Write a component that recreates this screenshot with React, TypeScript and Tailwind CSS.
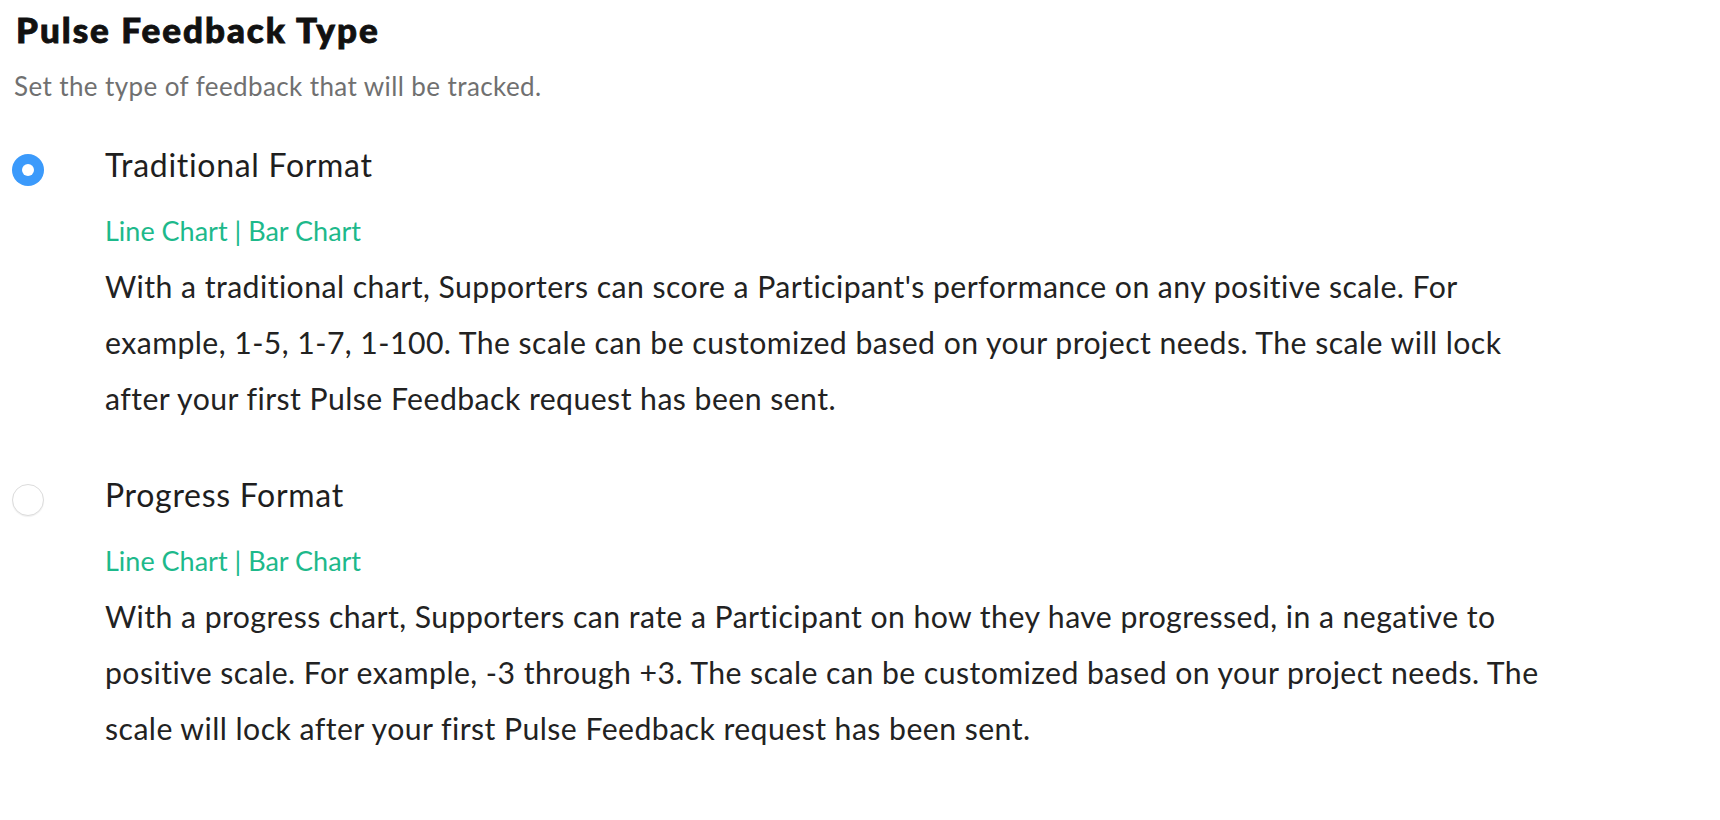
import { useState } from "react";

type Option = {
  id: string;
  title: string;
  lines: string[];
};

const options: Option[] = [
  {
    id: "traditional",
    title: "Traditional Format",
    lines: [
      "With a traditional chart, Supporters can score a Participant's performance on any positive scale. For",
      "example, 1-5, 1-7, 1-100. The scale can be customized based on your project needs. The scale will lock",
      "after your first Pulse Feedback request has been sent.",
    ],
  },
  {
    id: "progress",
    title: "Progress Format",
    lines: [
      "With a progress chart, Supporters can rate a Participant on how they have progressed, in a negative to",
      "positive scale. For example, -3 through +3. The scale can be customized based on your project needs. The",
      "scale will lock after your first Pulse Feedback request has been sent.",
    ],
  },
];

function Radio({ checked, onClick }: { checked: boolean; onClick: () => void }) {
  return (
    <button
      type="button"
      onClick={onClick}
      className={
        checked
          ? "mt-[9px] flex h-[32px] w-[32px] shrink-0 items-center justify-center rounded-full bg-[#3b9afb]"
          : "mt-[9px] flex h-[32px] w-[32px] shrink-0 items-center justify-center rounded-full border border-[#dcdcdc] bg-white shadow-[0_1px_1px_rgba(0,0,0,0.06)]"
      }
    >
      {checked ? <span className="h-[12px] w-[12px] rounded-full bg-white" /> : null}
    </button>
  );
}

export default function App() {
  const [selected, setSelected] = useState("traditional");

  return (
    <main className="min-h-screen bg-white pt-[7px] font-['Lato',_sans-serif] text-[#222] [font-variant-ligatures:none]">
      <h1 className="pl-[16px] text-[35px] leading-[44px] font-black tracking-[2px] text-[#111] [-webkit-text-stroke:0.9px_#111]">
        Pulse Feedback Type
      </h1>
      <p className="mt-[19px] pl-[14px] text-[26px] leading-[32px] tracking-[0.4px] text-[#707070]">
        Set the type of feedback that will be tracked.
      </p>

      <div className="mt-[43px] flex flex-col gap-[49px]">
        {options.map((o) => (
          <div key={o.id} className="flex pl-[12px]">
            <Radio checked={selected === o.id} onClick={() => setSelected(o.id)} />
            <div className="ml-[61px]">
              <h2 className="text-[32px] leading-[40px] tracking-[0.7px] text-[#1e1e1e]">{o.title}</h2>
              <div className="mt-[19px] text-[27px] leading-[54px] text-[#1db98b]">Line Chart | Bar Chart</div>
              <div className="text-[30.2px] leading-[56px] tracking-[0.45px] whitespace-nowrap text-[#222]">
                {o.lines.map((l) => (
                  <div key={l}>{l}</div>
                ))}
              </div>
            </div>
          </div>
        ))}
      </div>
    </main>
  );
}
